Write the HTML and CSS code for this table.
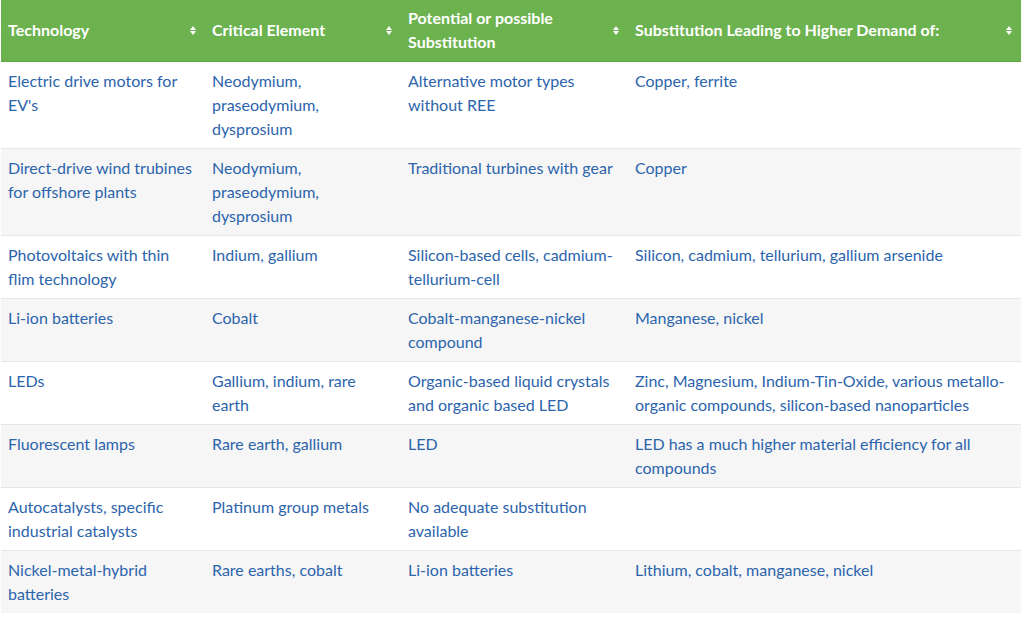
FILE: index.html
```html
<!DOCTYPE html>
<html>
<head>
<meta charset="utf-8">
<link rel="stylesheet" href="styles.css">
</head>
<body>
<table class="data">
  <colgroup>
    <col class="c1"><col class="c2"><col class="c3"><col class="c4">
  </colgroup>
  <thead>
    <tr>
      <th><div class="th"><span>Technology</span><i class="sort"></i></div></th>
      <th><div class="th"><span>Critical Element</span><i class="sort"></i></div></th>
      <th><div class="th"><span>Potential or possible<br>Substitution</span><i class="sort"></i></div></th>
      <th><div class="th"><span>Substitution Leading to Higher Demand of:</span><i class="sort"></i></div></th>
    </tr>
  </thead>
  <tbody>
    <tr><td>Electric drive motors for EV's</td><td>Neodymium, praseodymium, dysprosium</td><td>Alternative motor types without REE</td><td>Copper, ferrite</td></tr>
    <tr><td>Direct-drive wind trubines for offshore plants</td><td>Neodymium, praseodymium, dysprosium</td><td>Traditional turbines with gear</td><td>Copper</td></tr>
    <tr><td>Photovoltaics with thin flim technology</td><td>Indium, gallium</td><td>Silicon-based cells, cadmium-tellurium-cell</td><td>Silicon, cadmium, tellurium, gallium arsenide</td></tr>
    <tr><td>Li-ion batteries</td><td>Cobalt</td><td>Cobalt-manganese-nickel compound</td><td>Manganese, nickel</td></tr>
    <tr><td>LEDs</td><td>Gallium, indium, rare earth</td><td>Organic-based liquid crystals and organic based LED</td><td>Zinc, Magnesium, Indium-Tin-Oxide, various metallo-organic compounds, silicon-based nanoparticles</td></tr>
    <tr><td>Fluorescent lamps</td><td>Rare earth, gallium</td><td>LED</td><td>LED has a much higher material efficiency for all compounds</td></tr>
    <tr><td>Autocatalysts, specific industrial catalysts</td><td>Platinum group metals</td><td>No adequate substitution available</td><td></td></tr>
    <tr><td>Nickel-metal-hybrid batteries</td><td>Rare earths, cobalt</td><td>Li-ion batteries</td><td>Lithium, cobalt, manganese, nickel</td></tr>
  </tbody>
</table>
</body>
</html>
```
FILE: styles.css
```css
html, body {
  margin: 0;
  padding: 0;
  background: #ffffff;
}
body {
  padding: 0 3px 0 1px;
  font-family: "Lato", "Noto Sans", sans-serif;
}
.data {
  width: 1020px;
  border-collapse: collapse;
  table-layout: fixed;
  font-size: 16px;
  line-height: 24px;
}
.c1 { width: 204px; }
.c2 { width: 196px; }
.c3 { width: 227px; }
.c4 { width: 393px; }
thead th {
  background: #6cb24f;
  color: #ffffff;
  text-align: left;
  font-weight: bold;
  padding: 6px 8px 7px 7px;
  height: 48px;
  border-bottom: 1px solid #62a547;
  vertical-align: middle;
}
.th {
  display: flex;
  align-items: center;
  justify-content: space-between;
}
.sort {
  display: flex;
  flex-direction: column;
  gap: 1px;
  width: 7px;
  flex: none;
}
.sort::before, .sort::after {
  content: "";
  display: block;
  width: 0;
  height: 0;
  border-left: 3.5px solid transparent;
  border-right: 3.5px solid transparent;
}
.sort::before { border-bottom: 4px solid #ffffff; }
.sort::after { border-top: 4px solid #ffffff; }
tbody td {
  color: #2c64ac;
  padding: 7px 8px 7px 7px;
  vertical-align: top;
  border-top: 1px solid #e6e6e6;
}
tbody tr:nth-child(even) td {
  background: #f6f6f6;
}
```
